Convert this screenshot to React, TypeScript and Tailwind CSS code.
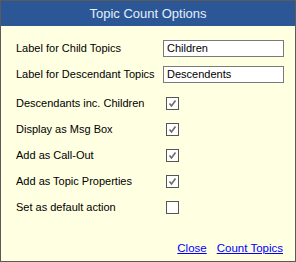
import React from "react";

const rows = [
  { label: "Descendants inc. Children", checked: true },
  { label: "Display as Msg Box", checked: true },
  { label: "Add as Call-Out", checked: true },
  { label: "Add as Topic Properties", checked: true },
  { label: "Set as default action", checked: false },
];

const CheckBox = ({ checked }: { checked: boolean }) => (
  <div className="w-[13px] h-[13px] border border-[#555555] bg-white flex items-center justify-center">
    {checked && (
      <svg width="9" height="9" viewBox="0 0 9 9">
        <path d="M1.5 4.5 L3.5 7 L7.5 1.5" fill="none" stroke="#6b6b6b" strokeWidth="1.6" />
      </svg>
    )}
  </div>
);

const App = () => {
  return (
    <div
      className="w-[296px] h-[262px] border border-[#5a5a5a] bg-[#ffffe1] flex flex-col text-[11px] text-black"
      style={{ fontFamily: '"Liberation Sans", Arial, sans-serif' }}
    >
      <div className="h-[25px] bg-[#2b5797] text-[#e6eefa] text-[13px] flex items-center justify-center">
        Topic Count Options
      </div>

      <div className="flex flex-col pl-[15px] pr-[11px] mt-[14px]">
        <div className="flex items-center h-[17px]">
          <span className="w-[147px] whitespace-nowrap">Label for Child Topics</span>
          <div className="flex-1 h-[17px] border border-[#7a7a7a] bg-white pl-[3px] flex items-center">
            Children
          </div>
        </div>
        <div className="flex items-center h-[17px] mt-[9px]">
          <span className="w-[147px] whitespace-nowrap">Label for Descendant Topics</span>
          <div className="flex-1 h-[17px] border border-[#7a7a7a] bg-white pl-[3px] flex items-center">
            Descendents
          </div>
        </div>

        <div className="flex flex-col mt-[7px]">
          {rows.map((row, index) => (
            <div key={`row${index}`} className="flex items-center h-[26px]">
              <span className="w-[150px] whitespace-nowrap">{row.label}</span>
              <CheckBox checked={row.checked} />
            </div>
          ))}
        </div>
      </div>

      <div className="flex justify-end gap-[10px] pr-[12px] mt-[20px] text-[11.5px] text-[#0000ff] underline">
        <span>Close</span>
        <span>Count Topics</span>
      </div>
    </div>
  );
};

export default App;
